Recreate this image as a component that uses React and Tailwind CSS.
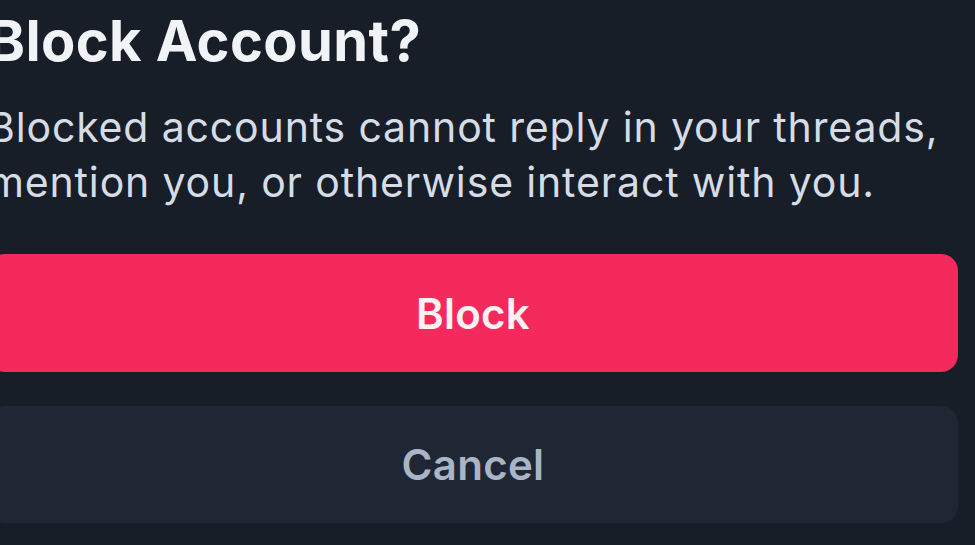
import React from 'react';

function App() {
    return (
        <div className="w-[975px] h-[545px] overflow-hidden bg-[#181e28] font-['Inter',sans-serif]">
            <div className="ml-[-12px] w-[970px] pt-[7px]">
                <h1 className="text-[56px] leading-[68px] font-bold text-[#f1f3f6] tracking-[0.4px] whitespace-nowrap">
                    Block Account?
                </h1>
                <p className="mt-[25px] text-[41px] leading-[54.5px] text-[#d6dce6] tracking-[0.85px] whitespace-nowrap">
                    Blocked accounts cannot reply in your threads,
                    <br />
                    mention you, or otherwise interact with you.
                </p>

                <div className="mt-[45px] flex flex-col gap-[34px]">
                    <button className="h-[118px] w-full rounded-[17px] bg-[#f32a5b] text-[42px] font-semibold tracking-[0.3px] text-[#fdf1f4]">
                        Block
                    </button>
                    <button className="h-[117px] w-full rounded-[17px] bg-[#1e2733] text-[42px] font-semibold tracking-[0.3px] text-[#a9b5c6]">
                        Cancel
                    </button>
                </div>
            </div>
        </div>
    );
}

export default App;
